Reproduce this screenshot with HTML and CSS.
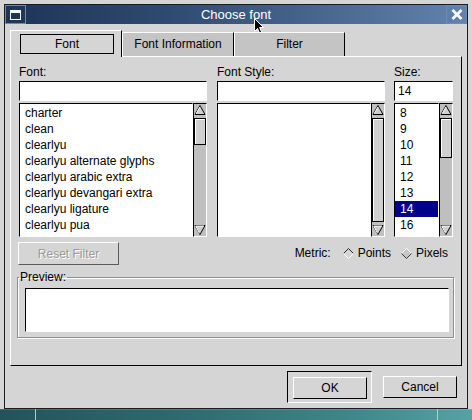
FILE: index.html
```html
<!DOCTYPE html>
<html>
<head>
<meta charset="utf-8">
<title>Choose font</title>
<link rel="stylesheet" href="styles.css">
</head>
<body>
<div class="screen">
  <div class="window">
    <div class="titlebar">
      <div class="tb-btn">
        <svg width="11" height="10" viewBox="0 0 11 10"><rect x="0.5" y="0.5" width="10" height="9" fill="none" stroke="#fff"/><rect x="0" y="0" width="11" height="3" fill="#fff"/></svg>
      </div>
      <div class="title">Choose font</div>
      <div class="tb-btn">
        <svg width="12" height="11" viewBox="0 0 12 11"><path d="M1.5,1 L10.5,10 M10.5,1 L1.5,10" stroke="#fff" stroke-width="2.6"/></svg>
      </div>
    </div>
    <div class="client">
      <div class="tabs">
        <div class="tab active"><span class="focus">Font</span></div>
        <div class="tab">Font Information</div>
        <div class="tab tab-last">Filter</div>
      </div>
      <div class="panel">
        <div class="columns">
          <div class="col col-font">
            <div class="lbl">Font:</div>
            <div class="input"></div>
            <div class="listwrap">
              <ul class="list">
                <li>charter</li>
                <li>clean</li>
                <li>clearlyu</li>
                <li>clearlyu alternate glyphs</li>
                <li>clearlyu arabic extra</li>
                <li>clearlyu devangari extra</li>
                <li>clearlyu ligature</li>
                <li>clearlyu pua</li>
              </ul>
              <div class="scroll">
                <svg class="arr" width="12" height="10" viewBox="0 0 12 10"><polygon points="6,0.5 11,9.5 1,9.5" fill="#cfcfcf" stroke="#000"/><path d="M2.2,8.6 L6,1.8" stroke="#fff"/></svg>
                <div class="thumb thumb-font"></div>
                <div class="trough"></div>
                <svg class="arr" width="12" height="10" viewBox="0 0 12 10"><polygon points="1,0.5 11,0.5 6,9.5" fill="#cfcfcf" stroke="#000"/><path d="M1.6,1 L10,1 M1.8,1.2 L5.6,8.4" stroke="#fff"/></svg>
              </div>
            </div>
          </div>
          <div class="col col-style">
            <div class="lbl">Font Style:</div>
            <div class="input"></div>
            <div class="listwrap">
              <ul class="list"></ul>
              <div class="scroll">
                <svg class="arr" width="12" height="10" viewBox="0 0 12 10"><polygon points="6,0.5 11,9.5 1,9.5" fill="#cfcfcf" stroke="#000"/><path d="M2.2,8.6 L6,1.8" stroke="#fff"/></svg>
                <div class="thumb thumb-full"></div>
                <svg class="arr" width="12" height="10" viewBox="0 0 12 10"><polygon points="1,0.5 11,0.5 6,9.5" fill="#cfcfcf" stroke="#000"/><path d="M1.6,1 L10,1 M1.8,1.2 L5.6,8.4" stroke="#fff"/></svg>
              </div>
            </div>
          </div>
          <div class="col col-size">
            <div class="lbl">Size:</div>
            <div class="input">14</div>
            <div class="listwrap">
              <ul class="list">
                <li>8</li>
                <li>9</li>
                <li>10</li>
                <li>11</li>
                <li>12</li>
                <li>13</li>
                <li class="sel">14</li>
                <li>16</li>
              </ul>
              <div class="scroll">
                <svg class="arr" width="12" height="10" viewBox="0 0 12 10"><polygon points="6,0.5 11,9.5 1,9.5" fill="#cfcfcf" stroke="#000"/><path d="M2.2,8.6 L6,1.8" stroke="#fff"/></svg>
                <div class="thumb thumb-size"></div>
                <div class="trough"></div>
                <svg class="arr" width="12" height="10" viewBox="0 0 12 10"><polygon points="1,0.5 11,0.5 6,9.5" fill="#cfcfcf" stroke="#000"/><path d="M1.6,1 L10,1 M1.8,1.2 L5.6,8.4" stroke="#fff"/></svg>
              </div>
            </div>
          </div>
        </div>
        <div class="row-mid">
          <button class="btn btn-reset" disabled>Reset Filter</button>
          <div class="metric">
            <span class="metric-lbl">Metric:</span>
            <svg class="dia" width="11" height="11" viewBox="0 0 11 11"><polygon points="5.5,0.5 10.5,5.5 5.5,10.5 0.5,5.5" fill="#d5d5d5"/><path d="M0.5,5.5 L5.5,0.5 L10.5,5.5" stroke="#2a2a2a" fill="none"/><path d="M0.5,5.5 L5.5,10.5 L10.5,5.5" stroke="#fff" fill="none"/></svg>
            <span class="opt">Points</span>
            <svg class="dia" width="11" height="11" viewBox="0 0 11 11"><polygon points="5.5,0.5 10.5,5.5 5.5,10.5 0.5,5.5" fill="#c6c6c6"/><path d="M0.5,5.5 L5.5,0.5 L10.5,5.5" stroke="#fff" fill="none"/><path d="M0.5,5.5 L5.5,10.5 L10.5,5.5" stroke="#3a3a3a" fill="none"/></svg>
            <span class="opt">Pixels</span>
          </div>
        </div>
        <fieldset class="preview">
          <legend>Preview:</legend>
          <div class="preview-box"></div>
        </fieldset>
      </div>
      <div class="buttons">
        <div class="default-frame"><button class="btn">OK</button></div>
        <button class="btn">Cancel</button>
      </div>
    </div>
  </div>
  <div class="taskbar">
    <div class="task task-a"></div>
    <div class="task task-b"></div>
    <div class="task task-c"></div>
  </div>
  <svg class="cursor" width="12" height="18" viewBox="0 0 12 18"><path d="M0.5,0.5 L0.5,13.5 L3.5,10.5 L6,16 L8,15 L5.6,9.5 L9.5,9.5 Z" fill="#000" stroke="#fff" stroke-width="1"/></svg>
</div>
</body>
</html>
```
FILE: styles.css
```css
* { box-sizing: border-box; }
html, body { margin: 0; padding: 0; }
body {
  width: 472px;
  height: 420px;
  overflow: hidden;
  background: #d5d5d5;
  font: 12px/15px "Liberation Sans", Arial, sans-serif;
  color: #000;
}
.screen {
  position: relative;
  width: 472px;
  height: 420px;
  padding-top: 4px;
  display: flex;
  flex-direction: column;
}
.window {
  margin-left: 4px;
  width: 464px;
  height: 405px;
  border: 1px solid #1c1c1c;
  background: #d5d5d5;
  display: flex;
  flex-direction: column;
}
.titlebar {
  height: 19px;
  display: flex;
  background: linear-gradient(to right, #1d3456 0%, #2f4a70 35%, #4a6890 70%, #6183ae 100%);
  color: #fff;
}
.tb-btn {
  width: 21px;
  height: 19px;
  border: 1px solid #7089ad;
  display: flex;
  align-items: center;
  justify-content: center;
}
.title {
  flex: 1;
  text-align: center;
  font-size: 13px;
  font-weight: normal;
  line-height: 19px;
}
.client {
  flex: 1;
  padding: 6px 0 0 5px;
  display: flex;
  flex-direction: column;
}
.tabs {
  display: flex;
  align-items: flex-end;
  height: 26px;
  position: relative;
  z-index: 1;
}
.tab {
  width: 112px;
  height: 24px;
  background: #c4c4c4;
  border-top: 1px solid #fff;
  border-left: 1px solid #fff;
  border-right: 1px solid #000;
  text-align: center;
  line-height: 22px;
}
.tab-last { width: 111px; }
.tab.active {
  height: 27px;
  background: #d5d5d5;
  padding: 3px 7px 0 9px;
  margin-bottom: -1px;
}
.focus {
  display: block;
  height: 20px;
  border: 1px solid #000;
  line-height: 18px;
}
.panel {
  width: 452px;
  height: 310px;
  border: 1px solid;
  border-color: #fff #000 #000 #fff;
  padding: 8px 7px 0 8px;
}
.columns {
  display: flex;
  gap: 9px;
}
.col-font { width: 188px; margin-right: 1px; }
.col-style { width: 168px; }
.col-size { width: 59px; }
.lbl {
  height: 15px;
  margin-bottom: 1px;
  white-space: nowrap;
}
.input {
  height: 20px;
  background: #fff;
  border: 1px solid;
  border-color: #000 #fff #fff #000;
  padding-left: 3px;
  line-height: 18px;
}
.listwrap {
  margin-top: 2px;
  height: 134px;
  display: flex;
}
.list {
  flex: 1;
  margin: 0;
  padding: 1px 0 0 0;
  list-style: none;
  background: #fff;
  border: 1px solid;
  border-color: #000 #fff #fff #000;
  overflow: hidden;
}
.list li {
  height: 16px;
  line-height: 16px;
  padding-left: 5px;
  white-space: nowrap;
}
.list li.sel {
  background: #00008a;
  color: #fff;
}
.scroll {
  width: 14px;
  border: 1px solid;
  border-color: #000 #fff #fff #000;
  background: #bfbfbf;
  display: flex;
  flex-direction: column;
}
.arr { display: block; flex: none; margin: 1px 0; }
.thumb {
  background: #cfcfcf;
  border: 1px solid #000;
  box-shadow: inset 1px 1px 0 #fff;
  margin-top: 2px;
}
.thumb-font { height: 27px; }
.thumb-size { height: 40px; }
.thumb-full { flex: 1; margin-bottom: 2px; }
.trough { flex: 1; }
.row-mid {
  margin-top: 5px;
  height: 23px;
  display: flex;
  align-items: center;
  justify-content: space-between;
}
.btn {
  font: inherit;
  font-size: 12px;
  background: #d5d5d5;
  border: 1px solid;
  border-color: #fff #000 #000 #fff;
  width: 74px;
  height: 22px;
  padding: 0;
  color: #000;
  line-height: 20px;
}
.btn-reset {
  width: 101px;
  height: 23px;
  margin-left: -1px;
  color: #9a9a9a;
  text-shadow: 1px 1px 0 #fff;
  border-color: #fff #5a5a5a #5a5a5a #fff;
}
.metric {
  display: flex;
  align-items: center;
  margin-right: 6px;
}
.metric-lbl { margin-right: 12px; }
.dia { display: block; margin-right: 4px; }
.opt { margin-right: 10px; }
.opt:last-child { margin-right: 0; }
.preview {
  margin: 5px 0 0 -2px;
  width: 437px;
  padding: 4px 4px 5px 7px;
  border: 1px solid #8e8e8e;
  box-shadow: inset 1px 1px 0 #fff, 1px 1px 0 #fff;
}
.preview legend {
  padding: 0 1px;
  margin-left: -6px;
  line-height: 14px;
  font-size: 12px;
}
.preview-box {
  height: 44px;
  background: #fff;
  border: 1px solid;
  border-color: #000 #fff #fff #000;
}
.buttons {
  margin-top: 5px;
  display: flex;
  justify-content: flex-end;
  align-items: center;
  gap: 11px;
  padding-right: 10px;
}
.default-frame {
  border: 1px solid;
  border-color: #000 #fff #fff #000;
  padding: 5px 4px 3px 5px;
}
.taskbar {
  height: 11px;
  display: flex;
  background: linear-gradient(to right, #23535a 0%, #2f6b70 40%, #3f878a 75%, #55a2a4 100%);
}
.task { height: 11px; box-shadow: inset 0 1px 0 rgba(255,255,255,0.15); }
.task-a { width: 35px; }
.task-b { flex: 1; border-left: 1px solid #a6d2d2; }
.task-c { width: 35px; border-left: 1px solid #a6d2d2; }
.cursor {
  position: absolute;
  left: 254px;
  top: 18px;
}
```
